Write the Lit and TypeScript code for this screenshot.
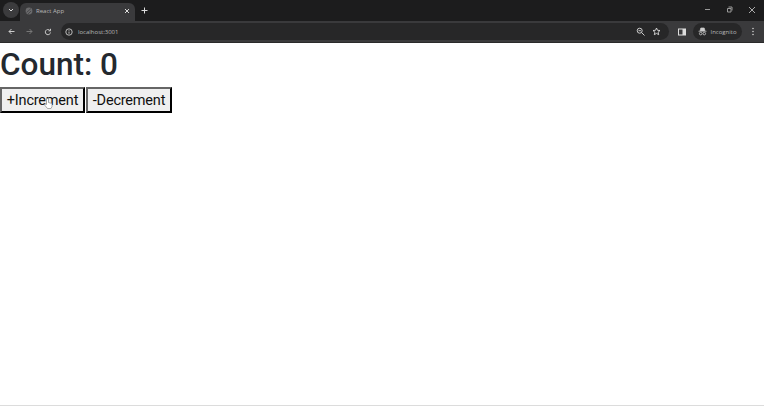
import { LitElement, html, css } from "lit";
import { customElement } from "lit/decorators.js";

@customElement("app-root")
export class AppRoot extends LitElement {
  static styles = css`
    :host { display: flex; flex-direction: column; width: 764px; height: 406px; background: #fff; overflow: hidden; font-family: "Open Sans", "Noto Sans", sans-serif; }
    svg { display: block; flex: none; }
    .tabs { height: 21px; background: #1c1c1d; display: flex; align-items: flex-end; color: #d8d8d8; }
    .tablist { width: 16px; height: 16px; margin: 0 0 3px 3px; border-radius: 50%; background: #3b3b3d; display: flex; align-items: center; justify-content: center; }
    .tab { width: 115px; height: 18px; margin-left: 1px; padding: 0 4px 2px 5px; box-sizing: border-box; background: #3a3a3c; border-radius: 6px 6px 0 0; display: flex; align-items: center; gap: 3px; font-size: 6px; color: #b8b8b8; }
    .tab span { flex: 1; }
    .plus { margin: 0 0 7px 6px; }
    .spacer { flex: 1; }
    .win { display: flex; align-self: stretch; align-items: center; gap: 15px; padding: 0 8px 2px 0; }
    .bar { height: 21px; background: #3a3a3c; display: flex; align-items: center; padding-left: 8px; box-sizing: border-box; }
    .nav { display: flex; align-items: center; gap: 11px; }
    .omni { width: 608px; height: 17px; margin-left: 9px; border-radius: 9px; background: #272728; display: flex; align-items: center; padding: 0 8px 0 4px; box-sizing: border-box; color: #b8b8b8; font-size: 6px; gap: 5px; }
    .omni span { flex: 1; }
    .omni-r { display: flex; gap: 7px; align-items: center; }
    .side { margin-left: 9px; }
    .incog { margin-left: 7px; width: 49px; height: 17px; border-radius: 9px; background: #272728; color: #b8b8b8; font-size: 6px; display: flex; align-items: center; justify-content: center; gap: 3px; }
    .more { margin-left: 9px; }
    .line { height: 1px; background: #2a2a2b; }
    .page { flex: 1; position: relative; color: #24292f; border-bottom: 1px solid #dcdcdc; }
    h1 { margin: 0; font-family: Roboto, sans-serif; font-size: 31.5px; font-weight: 500; line-height: 43px; height: 44px; white-space: nowrap; }
    .btns { display: flex; }
    button { all: unset; box-sizing: border-box; height: 26px; border: 2px solid; border-color: #666 #000 #000 #666; background: #efefef; color: #111; font-family: Roboto, sans-serif; font-size: 14.5px; letter-spacing: -0.2px; line-height: 24px; text-align: center; white-space: nowrap; }
    .inc { width: 85px; margin-right: 1px; }
    .dec { width: 86px; }
    .cursor { position: absolute; left: 44px; top: 54px; }
  `;

  render() {
    return html`
      <div class="tabs">
        <div class="tablist"><svg width="8" height="8" viewBox="0 0 8 8"><path d="M2 3l2 2 2-2" fill="none" stroke="#ddd" stroke-width="1"/></svg></div>
        <div class="tab">
          <svg width="8" height="8" viewBox="0 0 8 8"><circle cx="4" cy="4" r="3.4" fill="#6a6a6c"/><path d="M1.5 5.5L6 1.5M3 7l3-3" stroke="#3a3a3c" stroke-width=".7"/></svg>
          <span>React App</span>
          <svg width="8" height="8" viewBox="0 0 8 8"><path d="M2 2l4 4M6 2l-4 4" stroke="#ddd" stroke-width="1"/></svg>
        </div>
        <svg class="plus" width="7" height="7" viewBox="0 0 7 7"><path d="M3.500 .5v6M.5 3.500h6" stroke="#ddd" stroke-width="1"/></svg>
        <div class="spacer"></div>
        <div class="win">
          <svg width="7" height="7" viewBox="0 0 7 7"><path d="M1 3.500h5" stroke="#999" stroke-width="1"/></svg>
          <svg width="7" height="7" viewBox="0 0 7 7"><path d="M1.500 2.500h3.500v3.500h-3.500zM2.500 1h3.500v3.500" fill="none" stroke="#999" stroke-width="1"/></svg>
          <svg width="8" height="8" viewBox="0 0 8 8"><path d="M1 1l6 6M7 1l-6 6" stroke="#aaa" stroke-width="1"/></svg>
        </div>
      </div>
      <div class="bar">
        <div class="nav">
          <svg width="7" height="7" viewBox="0 0 7 7"><path d="M6.500 3.500h-5.500M3.500 1l-2.500 2.500 2.500 2.500" fill="none" stroke="#ccc" stroke-width="1"/></svg>
          <svg width="7" height="7" viewBox="0 0 7 7"><path d="M.5 3.500h5.500M3.500 1l2.500 2.500-2.500 2.500" fill="none" stroke="#777" stroke-width="1"/></svg>
          <svg width="8" height="8" viewBox="0 0 8 8"><path d="M6.500 4.500a2.600 2.600 0 1 1-.8-2.300M6.500 .8v2h-2" fill="none" stroke="#ccc" stroke-width="1"/></svg>
        </div>
        <div class="omni">
          <svg width="8" height="8" viewBox="0 0 8 8"><circle cx="4" cy="4" r="3.200" fill="none" stroke="#ccc" stroke-width=".9"/><path d="M4 3.500v2.200M4 2.200v.7" stroke="#ccc" stroke-width=".9"/></svg>
          <span>localhost:3001</span>
          <div class="omni-r">
            <svg width="9" height="9" viewBox="0 0 9 9"><circle cx="3.700" cy="3.700" r="2.500" fill="none" stroke="#ccc" stroke-width="1"/><path d="M5.500 5.500l3 3M2.500 3.700h2.400" stroke="#ccc" stroke-width="1"/></svg>
            <svg width="9" height="9" viewBox="0 0 9 9"><path d="M4.500 1l1 2.300 2.500.2-1.900 1.700.6 2.500-2.200-1.300-2.200 1.300.6-2.500-1.900-1.700 2.500-.2z" fill="none" stroke="#ddd" stroke-width=".9"/></svg>
          </div>
        </div>
        <svg class="side" width="8" height="8" viewBox="0 0 8 8"><rect x=".5" y="1" width="7" height="6" fill="none" stroke="#ddd"/><rect x="4.500" y="1" width="3" height="6" fill="#ddd"/></svg>
        <div class="incog">
          <svg width="9" height="9" viewBox="0 0 9 9"><path d="M.5 4.300h8M2 4l.8-3h3.400l.8 3" fill="#ccc" stroke="#ccc" stroke-width=".7"/><circle cx="2.700" cy="6.600" r="1.300" fill="none" stroke="#ccc" stroke-width=".8"/><circle cx="6.300" cy="6.600" r="1.300" fill="none" stroke="#ccc" stroke-width=".8"/></svg>
          Incognito
        </div>
        <svg class="more" width="4" height="9" viewBox="0 0 4 9"><circle cx="2" cy="1.500" r=".8" fill="#ccc"/><circle cx="2" cy="4.500" r=".8" fill="#ccc"/><circle cx="2" cy="7.500" r=".8" fill="#ccc"/></svg>
      </div>
      <div class="line"></div>
      <div class="page">
        <h1>Count: 0</h1>
        <div class="btns">
          <button class="inc">+Increment</button>
          <button class="dec">-Decrement</button>
        </div>
        <svg class="cursor" width="9" height="13" viewBox="0 0 9 13"><path d="M2.500 1.500v6l-1.500-1v2l2.500 3h3.500l1-2v-3l-3.500-1v-4z" fill="#fff" stroke="#888" stroke-width=".7"/></svg>
      </div>
    `;
  }
}
